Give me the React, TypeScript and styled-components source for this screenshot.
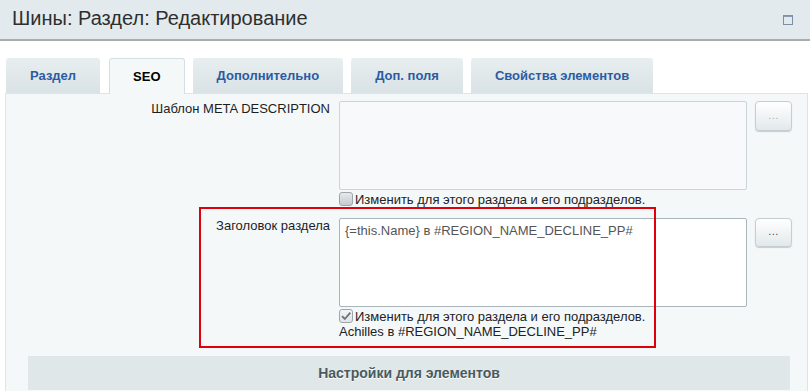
import React from "react";
import styled, { createGlobalStyle } from "styled-components";

const Global = createGlobalStyle`
  html, body { margin: 0; padding: 0; background: #fff; }
  body { font-family: "Liberation Sans", Arial, sans-serif; font-size: 13px; color: #000; }
  * { box-sizing: border-box; }
`;

const Page = styled.div`
  width: 810px;
  height: 391px;
  overflow: hidden;
`;

const Header = styled.header`
  height: 41px;
  background: #e3eaed;
  border-bottom: 2px solid #a9acae;
  display: flex;
  align-items: center;
  justify-content: space-between;
  padding: 0 17px 0 12px;
`;

const Title = styled.h1`
  margin: 0;
  font-size: 20px;
  font-weight: normal;
  color: #2f2f2f;
  line-height: 24px;
  margin-top: -3px;
`;

const Body = styled.div`
  padding: 17px 2px 0 5px;
`;

const Tabs = styled.div`
  display: flex;
  gap: 8px;
  padding-left: 1px;
  position: relative;
  z-index: 1;
`;

const Tab = styled.div<{ $active?: boolean }>`
  height: ${(p) => (p.$active ? "36px" : "35px")};
  padding: 0 ${(p) => (p.$active ? "23px" : "24px")};
  display: flex;
  align-items: center;
  font-weight: bold;
  font-size: 13px;
  border-radius: 3px 3px 0 0;
  color: ${(p) => (p.$active ? "#000" : "#2b5ba3")};
  background: ${(p) =>
    p.$active ? "#f5f8f9" : "linear-gradient(#e8eef0, #d9e2e5)"};
  border: ${(p) => (p.$active ? "1px solid #d3dfe3" : "none")};
  border-bottom: none;
  padding-bottom: ${(p) => (p.$active ? "1px" : "0")};
  margin-left: ${(p) => (p.$active ? "1px" : "0")};
`;

const Panel = styled.div`
  position: relative;
  background: #f5f8f9;
  border: 1px solid #dde5e8;
  border-bottom: none;
  margin-top: -1px;
  padding-top: 7px;
  height: 320px;
`;

const Row = styled.div<{ $gap?: number }>`
  display: flex;
  align-items: flex-start;
  margin-bottom: ${(p) => p.$gap ?? 0}px;
`;

const Label = styled.div`
  width: 333px;
  padding-right: 9px;
  text-align: right;
  line-height: 15px;
  color: #1e1e1e;
`;

const Field = styled.div`
  width: 408px;
  display: flex;
  flex-direction: column;
`;

const Area = styled.div<{ $disabled?: boolean }>`
  height: 89px;
  border: 1px solid ${(p) => (p.$disabled ? "#cbd4d8" : "#a9b5ba")};
  border-radius: 2px;
  background: ${(p) => (p.$disabled ? "#f7f9fa" : "#fff")};
  padding: 4px 5px;
  line-height: 15px;
  color: #555;
`;

const CheckLine = styled.label`
  display: flex;
  align-items: center;
  height: 16px;
  margin-top: 1px;
  line-height: 15px;
  color: #222;
`;

const Box = styled.span<{ $checked?: boolean }>`
  width: 14px;
  height: 14px;
  border-radius: 3px;
  border: 1px solid #9ea6aa;
  background: ${(p) =>
    p.$checked ? "linear-gradient(#f3f5f6, #dfe4e6)" : "linear-gradient(#e6e9eb, #c5cbce)"};
  display: inline-flex;
  align-items: center;
  justify-content: center;
  margin-right: 2px;
  flex-shrink: 0;
`;

const Note = styled.div`
  line-height: 15px;
  color: #222;
`;

const DotsButton = styled.div<{ $disabled?: boolean }>`
  width: 37px;
  height: ${(p) => (p.$disabled ? "30px" : "29px")};
  margin-left: 8px;
  border: 1px solid #c5cdd1;
  border-radius: 4px;
  background: linear-gradient(#ffffff, #e2e9eb);
  box-shadow: 0 1px 1px rgba(0, 0, 0, 0.18);
  display: flex;
  align-items: center;
  justify-content: center;
  font-size: 11px;
  letter-spacing: 0.5px;
  color: ${(p) => (p.$disabled ? "#a9b3b7" : "#444")};
  padding-bottom: 3px;
`;

const Highlight = styled.div`
  position: absolute;
  left: 193px;
  top: 113px;
  width: 457px;
  height: 141px;
  border: 2px solid #e0000b;
  pointer-events: none;
`;

const SectionBar = styled.div`
  margin: 17px 17px 0 22px;
  height: 34px;
  background: #e0e7e9;
  display: flex;
  align-items: center;
  justify-content: center;
  font-weight: bold;
  font-size: 14px;
  color: #4a5a5f;
  text-shadow: 0 1px 0 #fff;
`;

const Check = () => (
  <svg width="12" height="12" viewBox="0 0 12 12">
    <path d="M2 6.2 L4.8 9 L10.3 2.6" fill="none" stroke="#6d7477" strokeWidth="1.8" />
  </svg>
);

const MaxIcon = () => (
  <svg width="10" height="10" viewBox="0 0 10 10">
    <rect x="0.5" y="0.8" width="9" height="8.7" fill="none" stroke="#7b8ea2" strokeWidth="1" />
    <line x1="0" y1="1" x2="10" y2="1" stroke="#7b8ea2" strokeWidth="1.6" />
  </svg>
);

export default function App() {
  return (
    <Page>
      <Global />
      <Header>
        <Title>Шины: Раздел: Редактирование</Title>
        <MaxIcon />
      </Header>
      <Body>
        <Tabs>
          <Tab>Раздел</Tab>
          <Tab $active>SEO</Tab>
          <Tab>Дополнительно</Tab>
          <Tab>Доп. поля</Tab>
          <Tab>Свойства элементов</Tab>
        </Tabs>
        <Panel>
          <Row $gap={11}>
            <Label>Шаблон META DESCRIPTION</Label>
            <Field>
              <Area $disabled />
              <CheckLine>
                <Box />
                Изменить для этого раздела и его подразделов.
              </CheckLine>
            </Field>
            <DotsButton $disabled>...</DotsButton>
          </Row>
          <Row>
            <Label>Заголовок раздела</Label>
            <Field>
              <Area>{"{=this.Name} в #REGION_NAME_DECLINE_PP#"}</Area>
              <CheckLine>
                <Box $checked>
                  <Check />
                </Box>
                Изменить для этого раздела и его подразделов.
              </CheckLine>
              <Note>Achilles в #REGION_NAME_DECLINE_PP#</Note>
            </Field>
            <DotsButton>...</DotsButton>
          </Row>
          <SectionBar>Настройки для элементов</SectionBar>
          <Highlight />
        </Panel>
      </Body>
    </Page>
  );
}
